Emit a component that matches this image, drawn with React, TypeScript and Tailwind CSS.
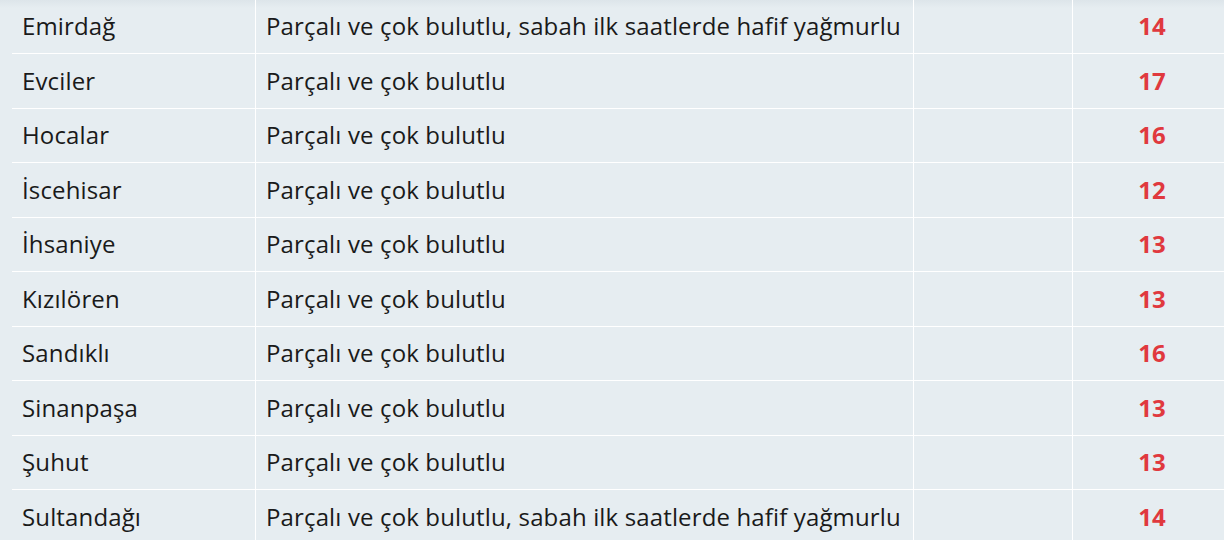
import React from "react";

const rows: [string, string, number][] = [
  ["Emirdağ", "Parçalı ve çok bulutlu, sabah ilk saatlerde hafif yağmurlu", 14],
  ["Evciler", "Parçalı ve çok bulutlu", 17],
  ["Hocalar", "Parçalı ve çok bulutlu", 16],
  ["İscehisar", "Parçalı ve çok bulutlu", 12],
  ["İhsaniye", "Parçalı ve çok bulutlu", 13],
  ["Kızılören", "Parçalı ve çok bulutlu", 13],
  ["Sandıklı", "Parçalı ve çok bulutlu", 16],
  ["Sinanpaşa", "Parçalı ve çok bulutlu", 13],
  ["Şuhut", "Parçalı ve çok bulutlu", 13],
  ["Sultandağı", "Parçalı ve çok bulutlu, sabah ilk saatlerde hafif yağmurlu", 14],
];

export default function App() {
  return (
    <div
      className="relative w-[1224px] h-[540px] overflow-hidden bg-[#e6edf1] text-[#1a1a1a]"
      style={{ fontFamily: '"Open Sans", "Noto Sans", sans-serif' }}
    >
      <div className="absolute left-0 top-0 h-[8px] w-full bg-gradient-to-b from-[#dde5ea] to-[#e6edf1]" />
      <div className="relative pl-[12px] mt-[-0.5px] w-[1242px]">
        {rows.map(([name, desc, t], i) => (
          <div
            key={i}
            className="flex h-[54.5px] border-b border-white text-[24px] leading-none font-normal tracking-[0.14px]"
          >
            <div className="w-[244px] shrink-0 flex items-center pl-[10px] border-r border-white">
              {name}
            </div>
            <div className="w-[658px] shrink-0 flex items-center pl-[10px] border-r border-white">
              {desc}
            </div>
            <div className="w-[159px] shrink-0 border-r border-white" />
            <div className="w-[158px] shrink-0 flex items-center justify-center font-bold tracking-normal text-[#e0393e]">
              {t}
            </div>
          </div>
        ))}
      </div>
    </div>
  );
}
